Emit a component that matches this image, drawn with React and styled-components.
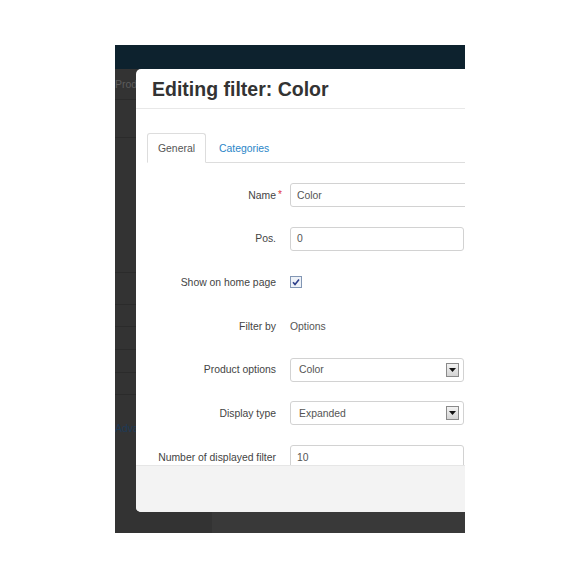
import React from "react";
import styled, { createGlobalStyle } from "styled-components";

const GlobalStyle = createGlobalStyle`
  html, body {
    margin: 0;
    padding: 0;
    background: #fff;
  }
  body {
    font-family: "Liberation Sans", Arial, sans-serif;
  }
`;

const Page = styled.div`
  width: 580px;
  height: 580px;
  padding: 45px 0 0 115px;
  box-sizing: border-box;
`;

const Backdrop = styled.div`
  position: relative;
  width: 350px;
  height: 488px;
  overflow: hidden;
  background: #373737;
  display: flex;
  flex-direction: column;
`;

const TopBar = styled.div`
  height: 24px;
  flex-shrink: 0;
  background: #0d222e;
`;

const Body = styled.div`
  flex: 1;
  display: flex;
`;

const Sidebar = styled.div`
  width: 97px;
  background: #333;
  display: flex;
  flex-direction: column;
`;

const SideRow = styled.div`
  height: ${(p) => p.h}px;
  box-sizing: border-box;
  border-bottom: 1px solid ${(p) => (p.line ? "#2b2b2b" : "transparent")};
  padding: ${(p) => p.pt || 0}px 0 0 0;
`;

const SideText = styled.div`
  width: 21px;
  overflow: hidden;
  white-space: nowrap;
  font-size: 10.5px;
  color: ${(p) => (p.link ? "#1e3a56" : "#5c5c5c")};
`;

const Main = styled.div`
  flex: 1;
  background: #393939;
`;

const Modal = styled.div`
  position: absolute;
  top: 24px;
  left: 21px;
  width: 380px;
  height: 443px;
  background: #fff;
  border-radius: 5px;
  overflow: hidden;
  display: flex;
  flex-direction: column;
`;

const Header = styled.div`
  height: 40px;
  flex-shrink: 0;
  box-sizing: border-box;
  border-bottom: 1px solid #e8e8e8;
  display: flex;
  align-items: center;
  padding: 1px 16px 0;
`;

const Title = styled.h3`
  margin: 0;
  font-size: 19.5px;
  font-weight: bold;
  color: #333;
`;

const Content = styled.div`
  flex: 1;
  overflow: hidden;
  padding: 24px 0 0 11px;
`;

const Tabs = styled.div`
  display: flex;
  border-bottom: 1px solid #ddd;
  height: 29px;
  gap: 2px;
`;

const Tab = styled.div`
  height: 30px;
  box-sizing: border-box;
  padding: 0 10px;
  display: flex;
  align-items: center;
  font-size: 10.4px;
  color: ${(p) => (p.active ? "#555" : "#2a86c8")};
  background: ${(p) => (p.active ? "#fff" : "transparent")};
  border: 1px solid ${(p) => (p.active ? "#ddd" : "transparent")};
  border-bottom-color: transparent;
  border-radius: 3px 3px 0 0;
`;

const Form = styled.div`
  display: flex;
  flex-direction: column;
  gap: 19.7px;
  padding-top: 20px;
`;

const Row = styled.div`
  height: 24px;
  display: flex;
  align-items: center;
  gap: 14px;
`;

const Label = styled.div`
  position: relative;
  width: 129px;
  text-align: right;
  font-size: 10.4px;
  color: #444;
  white-space: nowrap;
`;

const Required = styled.span`
  position: absolute;
  right: -6px;
  top: -1px;
  color: #e0333a;
  font-size: 10px;
`;

const Input = styled.div`
  width: ${(p) => p.w}px;
  height: 24px;
  box-sizing: border-box;
  border: 1px solid #d2d2d2;
  border-radius: 3px;
  padding: 0 6px;
  display: flex;
  align-items: center;
  font-size: 10.4px;
  color: #555;
  background: #fff;
`;

const Select = styled(Input)`
  justify-content: space-between;
  padding-right: 4px;
  padding-left: 8px;
`;

const Arrow = styled.span`
  width: 13px;
  height: 14px;
  box-sizing: border-box;
  border: 1px solid #8a8a8a;
  background: linear-gradient(#f2f2f2, #d4d4d4);
  display: flex;
  align-items: center;
  justify-content: center;
`;

const Value = styled.div`
  font-size: 10.4px;
  color: #555;
`;

const Footer = styled.div`
  height: 47px;
  flex-shrink: 0;
  background: #f3f3f3;
  border-top: 1px solid #e6e6e6;
  box-sizing: border-box;
`;

const Checkbox = () => (
  <svg width="12" height="12" viewBox="0 0 12 12">
    <rect x="0.5" y="0.5" width="11" height="11" fill="#eef2f8" stroke="#8296b4" />
    <path d="M3 6.2 L5 8.4 L9 3.4" fill="none" stroke="#2e3f8a" strokeWidth="1.6" />
  </svg>
);

const Caret = () => (
  <svg width="7" height="4" viewBox="0 0 7 4">
    <path d="M0 0 H7 L3.5 4 Z" fill="#111" />
  </svg>
);

const App = () => {
  return (
    <>
      <GlobalStyle />
      <Page>
        <Backdrop>
          <TopBar />
          <Body>
            <Sidebar>
              <SideRow h={31} pt={9} line>
                <SideText>Products</SideText>
              </SideRow>
              <SideRow h={38} line />
              <SideRow h={135} line />
              <SideRow h={32} line />
              <SideRow h={22} line />
              <SideRow h={23} line />
              <SideRow h={23} line />
              <SideRow h={22} line />
              <SideRow h={40} pt={27}>
                <SideText link>Advanced</SideText>
              </SideRow>
            </Sidebar>
            <Main />
          </Body>
          <Modal>
            <Header>
              <Title>Editing filter: Color</Title>
            </Header>
            <Content>
              <Tabs>
                <Tab active>General</Tab>
                <Tab>Categories</Tab>
              </Tabs>
              <Form>
                <Row>
                  <Label>
                    Name<Required>*</Required>
                  </Label>
                  <Input w={200}>Color</Input>
                </Row>
                <Row>
                  <Label>Pos.</Label>
                  <Input w={174}>0</Input>
                </Row>
                <Row>
                  <Label>Show on home page</Label>
                  <Checkbox />
                </Row>
                <Row>
                  <Label>Filter by</Label>
                  <Value>Options</Value>
                </Row>
                <Row>
                  <Label>Product options</Label>
                  <Select w={174}>
                    Color
                    <Arrow>
                      <Caret />
                    </Arrow>
                  </Select>
                </Row>
                <Row>
                  <Label>Display type</Label>
                  <Select w={174}>
                    Expanded
                    <Arrow>
                      <Caret />
                    </Arrow>
                  </Select>
                </Row>
                <Row>
                  <Label>Number of displayed filter</Label>
                  <Input w={174}>10</Input>
                </Row>
              </Form>
            </Content>
            <Footer />
          </Modal>
        </Backdrop>
      </Page>
    </>
  );
};

export default App;
